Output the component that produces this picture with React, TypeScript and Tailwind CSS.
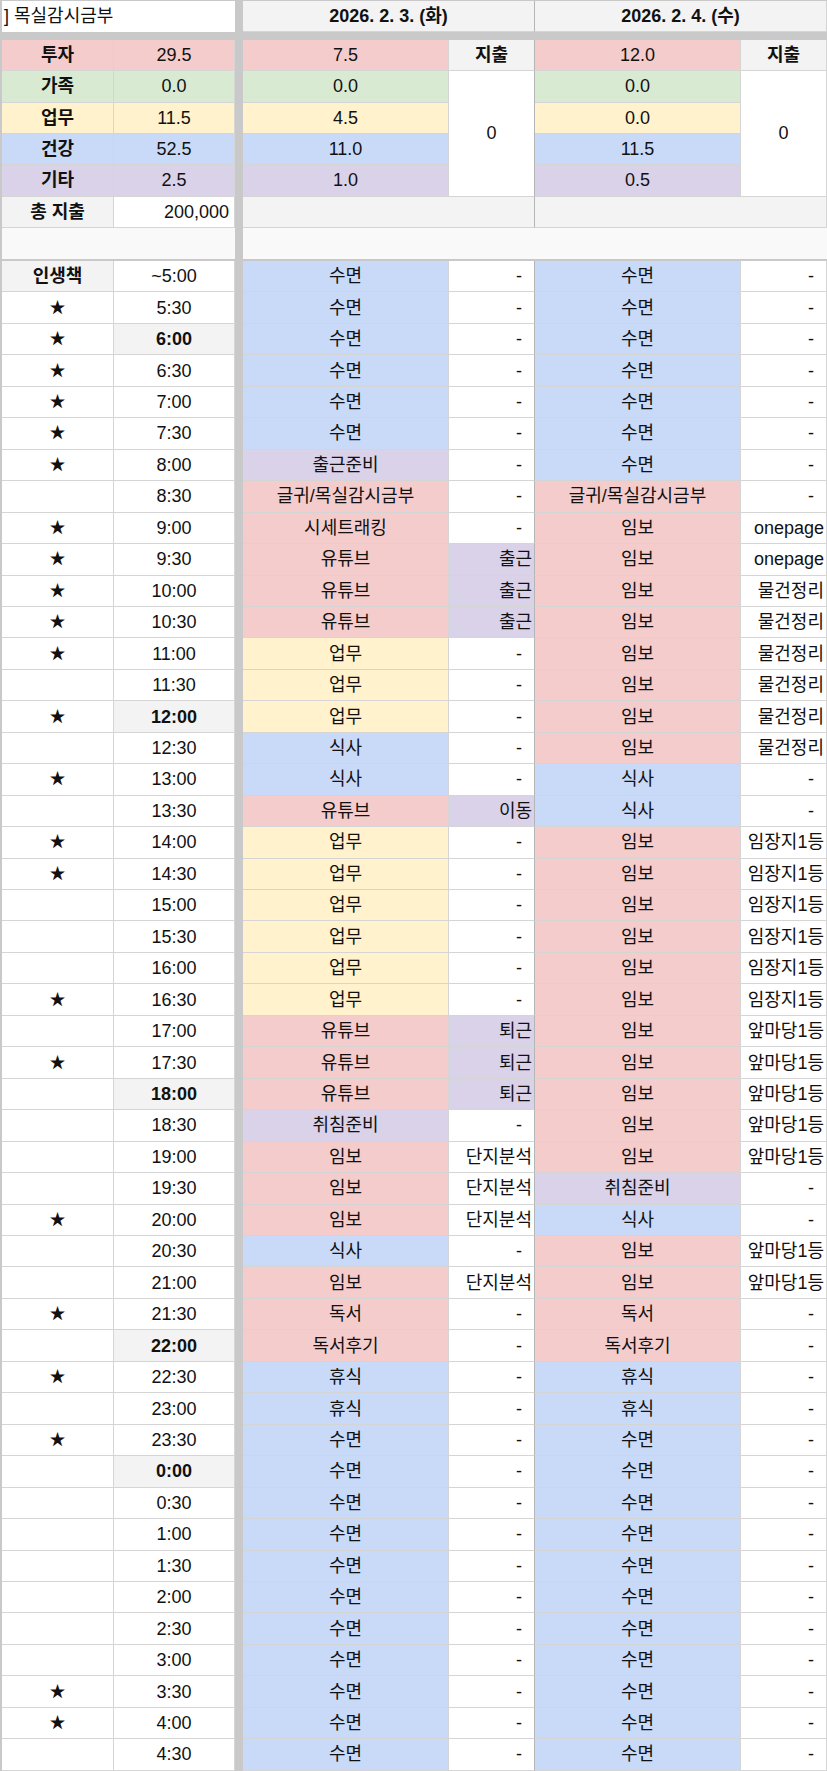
import clsx from "clsx"
import type { ReactNode } from "react"

type Row = [string, boolean, string, string, string, string]

const rows: Row[] = [
  ["~5:00", false, "수면", "-", "수면", "-"],
  ["5:30", true, "수면", "-", "수면", "-"],
  ["6:00", true, "수면", "-", "수면", "-"],
  ["6:30", true, "수면", "-", "수면", "-"],
  ["7:00", true, "수면", "-", "수면", "-"],
  ["7:30", true, "수면", "-", "수면", "-"],
  ["8:00", true, "출근준비", "-", "수면", "-"],
  ["8:30", false, "글귀/목실감시금부", "-", "글귀/목실감시금부", "-"],
  ["9:00", true, "시세트래킹", "-", "임보", "onepage"],
  ["9:30", true, "유튜브", "출근", "임보", "onepage"],
  ["10:00", true, "유튜브", "출근", "임보", "물건정리"],
  ["10:30", true, "유튜브", "출근", "임보", "물건정리"],
  ["11:00", true, "업무", "-", "임보", "물건정리"],
  ["11:30", false, "업무", "-", "임보", "물건정리"],
  ["12:00", true, "업무", "-", "임보", "물건정리"],
  ["12:30", false, "식사", "-", "임보", "물건정리"],
  ["13:00", true, "식사", "-", "식사", "-"],
  ["13:30", false, "유튜브", "이동", "식사", "-"],
  ["14:00", true, "업무", "-", "임보", "임장지1등"],
  ["14:30", true, "업무", "-", "임보", "임장지1등"],
  ["15:00", false, "업무", "-", "임보", "임장지1등"],
  ["15:30", false, "업무", "-", "임보", "임장지1등"],
  ["16:00", false, "업무", "-", "임보", "임장지1등"],
  ["16:30", true, "업무", "-", "임보", "임장지1등"],
  ["17:00", false, "유튜브", "퇴근", "임보", "앞마당1등"],
  ["17:30", true, "유튜브", "퇴근", "임보", "앞마당1등"],
  ["18:00", false, "유튜브", "퇴근", "임보", "앞마당1등"],
  ["18:30", false, "취침준비", "-", "임보", "앞마당1등"],
  ["19:00", false, "임보", "단지분석", "임보", "앞마당1등"],
  ["19:30", false, "임보", "단지분석", "취침준비", "-"],
  ["20:00", true, "임보", "단지분석", "식사", "-"],
  ["20:30", false, "식사", "-", "임보", "앞마당1등"],
  ["21:00", false, "임보", "단지분석", "임보", "앞마당1등"],
  ["21:30", true, "독서", "-", "독서", "-"],
  ["22:00", false, "독서후기", "-", "독서후기", "-"],
  ["22:30", true, "휴식", "-", "휴식", "-"],
  ["23:00", false, "휴식", "-", "휴식", "-"],
  ["23:30", true, "수면", "-", "수면", "-"],
  ["0:00", false, "수면", "-", "수면", "-"],
  ["0:30", false, "수면", "-", "수면", "-"],
  ["1:00", false, "수면", "-", "수면", "-"],
  ["1:30", false, "수면", "-", "수면", "-"],
  ["2:00", false, "수면", "-", "수면", "-"],
  ["2:30", false, "수면", "-", "수면", "-"],
  ["3:00", false, "수면", "-", "수면", "-"],
  ["3:30", true, "수면", "-", "수면", "-"],
  ["4:00", true, "수면", "-", "수면", "-"],
  ["4:30", false, "수면", "-", "수면", "-"],
]

const boldTimes = ["6:00", "12:00", "18:00", "22:00", "0:00"]

const RED = "bg-[#f4cccc]"
const GREEN = "bg-[#d9ead3]"
const YELLOW = "bg-[#fff2cc]"
const BLUE = "bg-[#c9daf8]"
const PURPLE = "bg-[#d9d2e9]"
const GRAY = "bg-[#f3f3f3]"

function activityBg(name: string) {
  if (name === "수면" || name === "식사" || name === "휴식") return BLUE
  if (name === "업무") return YELLOW
  if (name === "출근준비" || name === "취침준비") return PURPLE
  return RED
}

function noteBg(note: string) {
  if (note === "출근" || note === "이동" || note === "퇴근") return PURPLE
  return "bg-white"
}

function Cell({ className, children }: { className?: string; children?: ReactNode }) {
  return (
    <div className={clsx("flex items-center overflow-hidden whitespace-nowrap border-r border-b border-[#d5d5d5] leading-none", className)}>
      {children}
    </div>
  )
}

function Note({ text, className }: { text: string; className?: string }) {
  const dash = text === "-"
  return (
    <Cell className={clsx("justify-end", dash ? "pr-[12px]" : "pr-[2px]", noteBg(text), className)}>
      {text}
    </Cell>
  )
}

const summary = [
  { label: "투자", total: "29.5", d1: "7.5", d2: "12.0", bg: RED },
  { label: "가족", total: "0.0", d1: "0.0", d2: "0.0", bg: GREEN },
  { label: "업무", total: "11.5", d1: "4.5", d2: "0.0", bg: YELLOW },
  { label: "건강", total: "52.5", d1: "11.0", d2: "11.5", bg: BLUE },
  { label: "기타", total: "2.5", d1: "1.0", d2: "0.5", bg: PURPLE },
]

export default function App() {
  return (
    <div className="flex w-[827px] overflow-hidden bg-white font-['Liberation_Sans','Noto_Sans_CJK_KR',sans-serif] text-[18px] text-[#111]">
      {/* frozen columns */}
      <div className="flex w-[235px] shrink-0 flex-col border-l-2 border-[#c9c9c9]">
        <div className="flex h-[32px] items-center border-t border-[#c9c9c9] pl-[2px]">] 목실감시금부</div>
        <div className="h-[8px] bg-[#c9c9c9]" />
        <div className="grid grid-cols-[112px_121px] grid-rows-[repeat(6,31.33px)]">
          {summary.map((s) => (
            <div key={s.label} className="contents">
              <Cell className={clsx("justify-center font-bold", s.bg)}>{s.label}</Cell>
              <Cell className={clsx("justify-center", s.bg)}>{s.total}</Cell>
            </div>
          ))}
          <Cell className={clsx("justify-center font-bold", GRAY)}>총 지출</Cell>
          <Cell className="justify-end bg-white pr-[5px]">200,000</Cell>
        </div>
        <div className="h-[31px] bg-[#f9f9f9]" />
        <div className="h-[2px] bg-[#c9c9c9]" />
        {rows.map(([time, star], i) => (
          <div key={time} className="grid h-[31.46px] grid-cols-[112px_121px]">
            {i === 0 ? (
              <Cell className={clsx("justify-center font-bold", GRAY)}>인생책</Cell>
            ) : (
              <Cell className="justify-center bg-white text-[16px]">{star ? "★" : ""}</Cell>
            )}
            <Cell className={clsx("justify-center", boldTimes.includes(time) ? clsx("font-bold", GRAY) : "bg-white")}>
              {time}
            </Cell>
          </div>
        ))}
      </div>

      <div className="w-[8px] shrink-0 bg-[#c9c9c9]" />

      {/* day columns */}
      <div className="flex w-[584px] shrink-0 flex-col">
        <div className="grid h-[32px] grid-cols-[292px_292px] border-t border-[#c9c9c9] font-bold">
          <Cell className={clsx("justify-center border-r-[#b5b5b5]", GRAY)}>2026. 2. 3. (화)</Cell>
          <Cell className={clsx("justify-center", GRAY)}>2026. 2. 4. (수)</Cell>
        </div>
        <div className="h-[8px] bg-[#c9c9c9]" />
        <div className="grid grid-cols-[206px_86px_206px_86px] grid-rows-[repeat(6,31.33px)]">
          <Cell className={clsx("justify-center", RED)}>7.5</Cell>
          <Cell className={clsx("justify-center border-r-[#b5b5b5] font-bold", GRAY)}>지출</Cell>
          <Cell className={clsx("justify-center", RED)}>12.0</Cell>
          <Cell className={clsx("justify-center font-bold", GRAY)}>지출</Cell>

          <Cell className={clsx("col-start-1 row-start-2 justify-center", GREEN)}>0.0</Cell>
          <Cell className="col-start-2 row-span-4 row-start-2 justify-center border-r-[#b5b5b5] bg-white">0</Cell>
          <Cell className={clsx("col-start-3 row-start-2 justify-center", GREEN)}>0.0</Cell>
          <Cell className="col-start-4 row-span-4 row-start-2 justify-center bg-white">0</Cell>

          {summary.slice(2).map((s, i) => (
            <div key={s.label} className="contents">
              <Cell className={clsx("col-start-1 justify-center", s.bg, ["row-start-3", "row-start-4", "row-start-5"][i])}>{s.d1}</Cell>
              <Cell className={clsx("col-start-3 justify-center", s.bg, ["row-start-3", "row-start-4", "row-start-5"][i])}>{s.d2}</Cell>
            </div>
          ))}

          <Cell className={clsx("col-span-2 col-start-1 row-start-6 border-r-[#b5b5b5]", GRAY)} />
          <Cell className={clsx("col-span-2 col-start-3 row-start-6", GRAY)} />
        </div>
        <div className="h-[31px] bg-[#f9f9f9]" />
        <div className="h-[2px] bg-[#c9c9c9]" />
        {rows.map(([time, , a1, n1, a2, n2]) => (
          <div key={time} className="grid h-[31.46px] grid-cols-[206px_86px_206px_86px]">
            <Cell className={clsx("justify-center", activityBg(a1))}>{a1}</Cell>
            <Note text={n1} className="border-r-[#b5b5b5]" />
            <Cell className={clsx("justify-center", activityBg(a2))}>{a2}</Cell>
            <Note text={n2} />
          </div>
        ))}
      </div>
    </div>
  )
}
